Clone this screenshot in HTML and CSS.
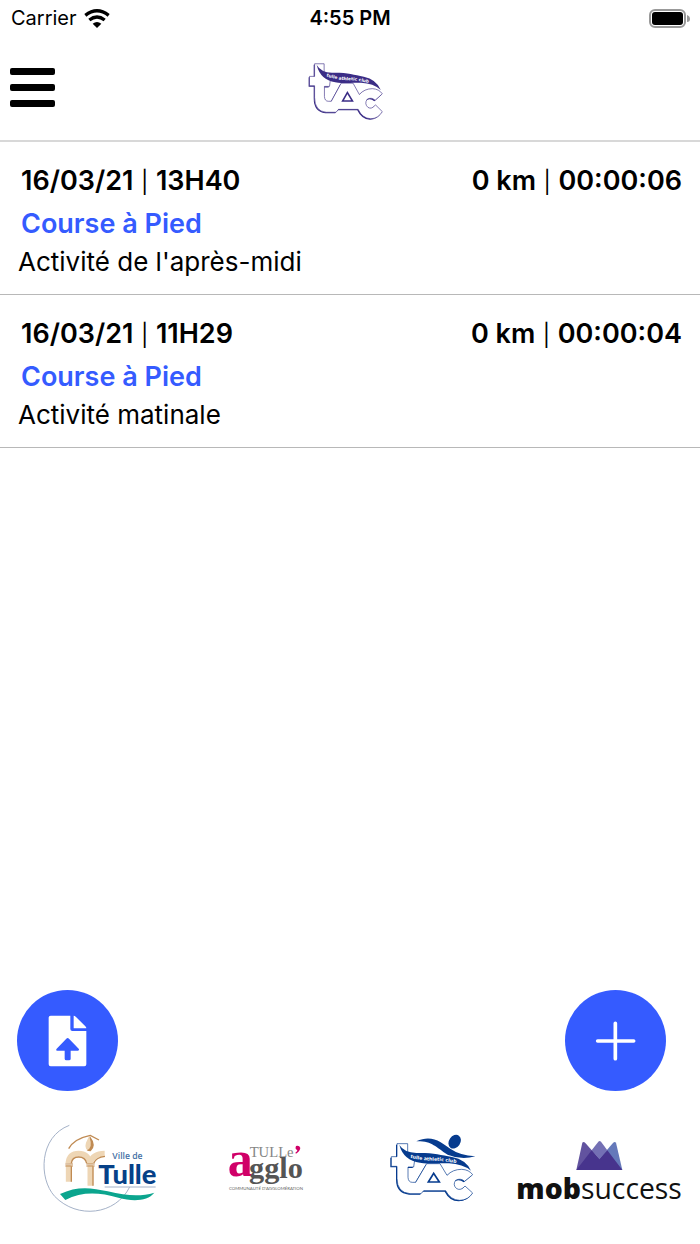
FILE: index.html
```html
<!DOCTYPE html>
<html lang="fr">
<head>
<meta charset="utf-8">
<meta name="viewport" content="width=device-width, initial-scale=1">
<title>Activités</title>
<link rel="stylesheet" href="styles.css">
</head>
<body>
<svg class="defs" aria-hidden="true">
  <defs>
    <g id="tac-letters">
      <path class="tac-shade" d="M50 56H82V95L104 98L100 126H83V157Q84 172 96 172H106L139 116H179L200 151Q217 133 244 133Q266 134 277 149L253 169Q240 158 226 166Q216 180 229 191Q242 198 254 183L277 204Q263 226 238 226Q210 225 196 197H130L122 206H89Q50 203 50 160V124H33V95H50Z"/>
      <path class="tac-outline" d="M50 56H82V95L104 98L100 126H83V157Q84 172 96 172H106L139 116H179L200 151Q217 133 244 133Q266 134 277 149L253 169Q240 158 226 166Q216 180 229 191Q242 198 254 183L277 204Q263 226 238 226Q210 225 196 197H130L122 206H89Q50 203 50 160V124H33V95H50Z"/>
      <path class="tac-triangle" d="M144 171L160 145L177 171Z"/>
      <path class="tac-solid" d="M57 60Q72 83 108 84C160 83 180 90 215 96Q257 104 272 137Q247 117 206 115C168 115 147 117 119 113Q70 107 57 60Z"/>
    </g>
  </defs>
</svg>
<div class="app">
  <div class="status">
    <div class="carrier">
      <span>Carrier</span>
      <svg class="wifi" viewBox="0 0 78 57" aria-hidden="true"><g fill="none" stroke="#000" stroke-width="10"><path d="M4 19Q39-8 74 19"/><path d="M16 33Q39 15 62 33"/></g><path d="M26 44Q39 34 52 44L39 57Z"/></svg>
    </div>
    <div class="clock">4:55 PM</div>
    <svg class="battery" viewBox="0 0 41 19" aria-hidden="true"><rect x="1" y="1" width="35" height="17" rx="5" fill="#fff" stroke="#999" stroke-width="2"/><rect x="3" y="3" width="31" height="13" rx="3"/><path d="M38 6Q41 7 41 10T38 13Z" fill="#999"/></svg>
  </div>
  <header class="header">
    <button class="menu" aria-label="Menu"><svg viewBox="0 0 45 39" aria-hidden="true"><rect width="45" height="7" rx="2"/><rect y="16" width="45" height="7" rx="2"/><rect y="32" width="45" height="7" rx="2"/></svg></button>
    <svg class="brand tac-violet" viewBox="0 0 285 240" role="img" aria-label="Tulle Athletic Club">
      <g transform="translate(-10 -13) scale(.895 .97)"><use href="#tac-letters"/></g>
      <path id="brand-curve" d="M70 79Q105 91 139 91T221 106" fill="none"/>
      <text class="club club-small"><textPath href="#brand-curve">tulle athletic club</textPath></text>
    </svg>
  </header>
  <main class="list">
    <article class="activity">
      <div class="row"><div><b>16/03/21</b> <span class="bar">|</span> <b>13H40</b></div><div><b>0 km</b> <span class="bar">|</span> <b>00:00:06</b></div></div>
      <h2 class="sport">Course à Pied</h2>
      <p class="name">Activité de l'après-midi</p>
    </article>
    <article class="activity">
      <div class="row"><div><b>16/03/21</b> <span class="bar">|</span> <b>11H29</b></div><div><b>0 km</b> <span class="bar">|</span> <b>00:00:04</b></div></div>
      <h2 class="sport">Course à Pied</h2>
      <p class="name">Activité matinale</p>
    </article>
  </main>
  <div class="actions">
    <button class="round" aria-label="Importer"><svg viewBox="0 0 303 303" aria-hidden="true"><path fill="#fff" d="M101 77H160V117Q160 123 166 123H208V223Q208 229 202 229H101Q95 229 95 223V83Q95 77 101 77ZM170 77Q173 77 177 81L205 109Q208 112 208 115H170ZM148 146L119 176Q115 182 121 182H143V206Q143 211 148 211H156Q161 211 161 206V182H183Q188 181 185 176L156 146Q152 142 148 146Z"/></svg></button>
    <button class="round" aria-label="Ajouter"><svg viewBox="0 0 303 303" aria-hidden="true"><path d="M151 100V206M98 153H206" stroke="#fff" stroke-width="11" stroke-linecap="round"/></svg></button>
  </div>
  <footer class="partners">
    <svg viewBox="-38 0 498 315" role="img" aria-label="Ville de Tulle">
      <path d="M116 31C25 65 23 190 72 244C140 314 255 300 297 216" fill="none" stroke="#a5b2c8" stroke-width="3"/>
      <g fill="none" stroke="#eed6b5" stroke-width="17"><path d="M114 200V150M179 212V150"/><path d="M113 145Q116 116 144 116T178 145Q186 116 222 116"/></g>
      <g fill="none" stroke="#c08b53" stroke-width="4"><path d="M122 200V154M187 212V154M122 145Q124 126 144 126Q164 126 168 145M189 145Q196 127 223 124"/><path d="M114 101Q130 71 179 61L205 75"/></g>
      <path d="M104 147H127M167 147H192M104 153H127M167 153H192" stroke="#c08b53" stroke-width="3"/>
      <path d="M174 66Q197 86 180 108Q159 105 166 83Z" fill="#eed6b5"/>
      <path d="M179 65Q199 91 180 109Q172 109 168 106Q188 98 176 65Z" fill="#c08b53"/>
      <path d="M88 237C137 213 180 217 231 229C290 243 330 245 371 233C350 259 306 260 263 248C205 232 154 229 104 255Z" fill="#0ba58e"/>
      <path d="M222 216H375" stroke="#a5b2c8" stroke-width="3"/>
      <text x="245" y="133" class="ville">Ville de</text>
      <text x="203" y="207" class="tulle">Tulle</text>
    </svg>
    <svg viewBox="-107 -45 498 315" role="img" aria-label="Tulle Agglo">
      <text x="24" y="138" class="agglo-a">a</text>
      <text x="90" y="81" class="agglo-tulle">TULLe</text>
      <text x="88" y="145" class="agglo">gglo</text>
      <path d="M229 48Q239 45 242 54Q240 65 229 71L227 68Q234 64 233 60Q225 58 229 48Z" fill="#d00068"/>
      <text x="28" y="181" class="community">COMMUNAUTÉ D'AGGLOMÉRATION</text>
    </svg>
    <svg class="tac-blue" viewBox="-91 -30 498 315" role="img" aria-label="Tulle Athletic Club">
      <use href="#tac-letters"/>
      <path class="tac-solid" d="M108 49C155 27 184 53 211 72Q238 91 285 94Q243 106 202 89C164 66 157 48 108 49Z"/>
      <ellipse class="tac-solid" cx="223" cy="50" rx="17" ry="22" transform="rotate(35 223 50)"/>
      <path id="club-curve" d="M90 98Q125 107 160 107T245 118" fill="none"/>
      <text class="club"><textPath href="#club-curve">tulle athletic club</textPath></text>
    </svg>
    <svg viewBox="33 -45 498 315" role="img" aria-label="mobsuccess">
      <path d="M214 120L232 38Q236 34 241 39L283 86V120Z" fill="#62539f"/>
      <path d="M352 120L333 38Q329 34 324 39L283 86V120Z" fill="#6579ba"/>
      <path d="M260 61L280 35Q284 31 288 35L307 61L283 88Z" fill="#7470b4"/>
      <path d="M214 120L260 61L283 88L307 61L352 120Z" fill="#47348d"/>
      <text x="34" y="206" class="mob"><tspan class="mob-bold">mob</tspan>success</text>
    </svg>
  </footer>
</div>
</body>
</html>
```

FILE: styles.css
```css
* { box-sizing: border-box; }
body { margin: 0; background: #fff; color: #000; font-family: Inter, "Liberation Sans", sans-serif; }
.defs { position: absolute; width: 0; height: 0; }
.app { display: flex; flex-direction: column; min-height: 100vh; }

.status { display: grid; grid-template-columns: 1fr auto 1fr; align-items: center; height: 36px; padding: 0 10px; font-size: 20px; }
.carrier { display: flex; align-items: center; gap: 7px; padding-left: 1px; }
.wifi { width: 26px; height: 19px; }
.clock { font-weight: 600; }
.battery { width: 41px; height: 19px; justify-self: end; }

.header { display: grid; grid-template-columns: 1fr auto 1fr; align-items: center; padding: 14px 10px 10px; border-bottom: 2px solid #d8d8d8; }
.menu { width: 45px; height: 39px; padding: 0; border: 0; background: none; margin-bottom: 6px; }
.menu svg { display: block; width: 100%; }
.brand { display: block; width: 95px; height: 80px; }

.activity { padding: 20px 18px 15px; border-bottom: 1px solid #b8b8b8; font-size: 26px; }
.row { display: flex; justify-content: space-between; padding-left: 3px; font-size: 27px; line-height: 38px; }
.row b { font-weight: 600; }
.bar { font-size: 22px; line-height: 1; }
.sport { margin: 0; padding: 4px 3px 0; font-size: 27px; line-height: 40px; font-weight: 600; color: #355bff; }
.name { margin: 0; line-height: 35px; }

.actions { display: flex; justify-content: space-between; margin-top: auto; padding: 0 34px 24px 17px; }
.round { width: 101px; height: 101px; padding: 0; border: 0; border-radius: 50%; background: #355bff; }
.round svg { display: block; width: 100%; }

.partners { display: grid; grid-template-columns: repeat(4, 1fr); padding: 0 18px 24px; }
.partners svg { display: block; width: 100%; height: 105px; }

.tac-violet { color: #3b2d86; }
.tac-blue { color: #063b8e; }
.tac-shade { fill: currentColor; transform: translate(-3px, 3px); }
.tac-outline { fill: #fff; stroke: currentColor; stroke-width: 2px; }
.tac-triangle { fill: #fff; stroke: currentColor; stroke-width: 5px; }
.tac-solid { fill: currentColor; }
.club { fill: #fff; font: 700 14px "DejaVu Sans", sans-serif; }
.club-small { font-size: 13px; }

.ville { fill: #4571a5; font: 600 26px "Open Sans", sans-serif; }
.tulle { fill: #064188; font: 900 82px Lato, sans-serif; }
.agglo-a { fill: #d00068; font: 700 150px "Liberation Serif", serif; }
.agglo-tulle { fill: #858585; font: 400 44px "Liberation Serif", serif; }
.agglo { fill: #555; font: 700 91px "Liberation Serif", serif; }
.community { fill: #666; font: 400 13px Lato, sans-serif; }
.mob { fill: #111; font: 400 85px "Open Sans", sans-serif; }
.mob-bold { font-weight: 800; }
```
